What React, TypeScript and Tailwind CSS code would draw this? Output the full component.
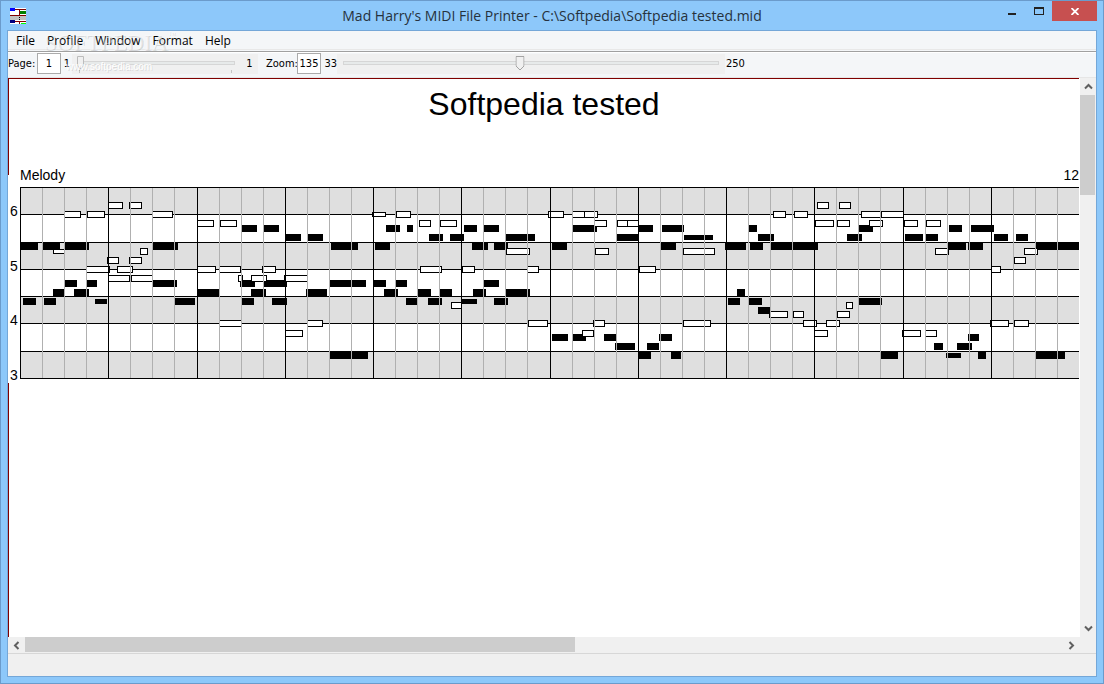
import { useState } from "react";

type Span = [start: number, end: number];
type Row = { y: number; h?: number; spans: Span[] };

const solidRows: Row[] = [
  { y: 225, spans: [[242, 257], [264, 279], [386, 400], [407, 413], [464, 477], [484, 499], [573, 597], [638, 653], [662, 684], [749, 757], [859, 873], [949, 962], [971, 994]] },
  { y: 234, spans: [[286, 301], [308, 323], [429, 443], [450, 464], [506, 535], [617, 639], [758, 774], [847, 862], [905, 923], [926, 938], [994, 1008], [1016, 1028]] },
  { y: 235, h: 5, spans: [[684, 713]] },
  { y: 243, spans: [[20, 38], [43, 60], [65, 89], [153, 178], [331, 358], [375, 390], [472, 488], [494, 508], [552, 567], [661, 676], [725, 746], [750, 763], [771, 818], [948, 966], [968, 983], [1036, 1079]] },
  { y: 280, spans: [[65, 77], [87, 97], [153, 177], [240, 255], [264, 287], [330, 366], [373, 386], [396, 407], [484, 499]] },
  { y: 289, spans: [[53, 64], [74, 89], [197, 219], [251, 266], [306, 327], [384, 398], [418, 431], [440, 452], [473, 486], [506, 530], [737, 745]] },
  { y: 298, spans: [[23, 36], [44, 56], [175, 195], [242, 254], [272, 287], [406, 417], [428, 442], [494, 508], [728, 740], [749, 762], [859, 882]] },
  { y: 299, h: 5, spans: [[95, 107], [461, 477]] },
  { y: 307, spans: [[758, 770]] },
  { y: 334, spans: [[552, 568], [573, 586], [604, 616], [659, 672], [968, 979]] },
  { y: 343, spans: [[615, 635], [647, 659], [934, 943], [957, 972]] },
  { y: 352, spans: [[330, 368], [638, 651], [671, 681], [881, 898], [978, 986], [1036, 1065]] },
  { y: 353, h: 5, spans: [[946, 961]] },
];

const hollowRows: Row[] = [
  { y: 202, spans: [[108, 123], [129, 142], [817, 829], [839, 851]] },
  { y: 211, spans: [[64, 81], [87, 105], [152, 173], [396, 411], [548, 564], [572, 585], [584, 598], [773, 786], [794, 808], [861, 882], [881, 904]] },
  { y: 212, h: 5, spans: [[372, 386]] },
  { y: 220, spans: [[197, 214], [220, 237], [419, 431], [440, 457], [594, 607], [617, 628], [627, 639], [815, 834], [837, 850], [869, 883], [904, 918], [926, 941]] },
  { y: 248, spans: [[140, 148], [506, 530], [595, 609], [683, 715], [935, 949], [1024, 1038]] },
  { y: 249, h: 5, spans: [[53, 65]] },
  { y: 257, spans: [[107, 119], [129, 142], [1014, 1026]] },
  { y: 266, spans: [[86, 110], [117, 133], [197, 216], [219, 241], [262, 276], [420, 442], [462, 475], [527, 539], [639, 656], [991, 1001]] },
  { y: 275, spans: [[108, 130], [131, 153], [238, 243], [251, 267], [284, 308]] },
  { y: 302, spans: [[451, 462], [846, 853]] },
  { y: 311, spans: [[769, 788], [793, 804], [837, 850]] },
  { y: 320, spans: [[219, 242], [307, 323], [528, 548], [593, 605], [683, 711], [803, 817], [826, 840], [990, 1009], [1014, 1029]] },
  { y: 330, spans: [[285, 303], [582, 594], [814, 828], [902, 921], [925, 937]] },
];

const staffLines = [187, 214, 242, 269, 296, 323, 351, 378];
const barLines = [20, 108, 197, 285, 373, 461, 550, 638, 726, 814, 903, 991];
const octaves = [
  { label: "6", y: 216 },
  { label: "5", y: 271 },
  { label: "4", y: 325 },
  { label: "3", y: 380 },
];

function Score() {
  return (
    <svg
      width="1071"
      height="208"
      viewBox="8 175 1071 208"
      shapeRendering="crispEdges"
      className="block shrink-0 overflow-visible font-['Liberation_Sans',Arial,sans-serif] text-[14px]"
      role="img"
      aria-label="Melody"
    >
      <text x="20" y="180">Melody</text>
      <text x="1079" y="180" textAnchor="end">12</text>
      {octaves.map((o) => (
        <text key={o.label} x="10" y={o.y}>{o.label}</text>
      ))}
      {staffLines.slice(0, -1).map((y, i) => (
        <rect key={y} x="20" y={y} width="1059" height={staffLines[i + 1] - y} fill={i % 2 === 0 ? "#dfdfdf" : "#fff"} />
      ))}
      {staffLines.map((y) => (
        <rect key={y} x="20" y={y} width="1059" height="1" />
      ))}
      {hollowRows.filter((r) => r.y === 249).map((r) => <HollowNotes key={r.y} row={r} />)}
      {solidRows.map((r) =>
        r.spans.map(([a, b]) => <rect key={`${r.y}-${a}`} x={a} y={r.y} width={b - a} height={r.h ?? 7} />),
      )}
      {hollowRows.filter((r) => r.y !== 249).map((r) => <HollowNotes key={r.y} row={r} />)}
      {barLines.map((x) => (
        <g key={x}>
          <rect x={x} y="187" width="1" height="192" />
          {[22, 44, 66].map((d) => (
            <rect key={d} x={x + d} y="188" width="1" height="190" fill="#b0b0b0" />
          ))}
        </g>
      ))}
    </svg>
  );
}

function HollowNotes({ row }: { row: Row }) {
  const h = row.h ?? 7;
  return (
    <>
      {row.spans.map(([a, b]) => (
        <g key={a}>
          <rect x={a} y={row.y} width={b - a} height={h} />
          <rect x={a + 1} y={row.y + 1} width={b - a - 2} height={h - 2} fill="#fff" />
        </g>
      ))}
    </>
  );
}

function AppIcon() {
  return (
    <svg width="16" height="16" viewBox="0 0 16 16" shapeRendering="crispEdges" aria-hidden="true">
      <rect width="16" height="16" fill="#fff" />
      <rect y="8" width="16" height="4" fill="#c0c0c0" />
      <rect y="1" width="16" height="1" fill="#800000" />
      <rect y="7" width="16" height="1" fill="#800000" />
      <rect y="13" width="16" height="1" fill="#800000" />
      <rect x="9" y="1" width="1" height="7" fill="#800000" />
      <rect x="9" y="9" width="1" height="1" />
      <rect x="9" y="11" width="1" height="1" />
      <rect x="9" y="13" width="1" height="3" fill="#800000" />
      <rect width="5" height="3" fill="#00f" />
      <rect x="10" y="3" width="6" height="3" fill="#008000" />
      <rect y="12" width="5" height="3" fill="#000080" />
      <rect x="11" y="15" width="5" height="1" fill="#0f0" />
    </svg>
  );
}

type SliderProps = { label: string; min: number; max: number; value: number; onChange: (v: number) => void; ticks?: boolean };

function Slider({ label, min, max, value, onChange, ticks }: SliderProps) {
  const ratio = max > min ? (value - min) / (max - min) : 0;
  return (
    <div className="relative h-5 w-full bg-[#f0f0f0] px-1.5 pt-[7px]">
      <div className="relative h-1 border border-[#d6d6d6] bg-[#e7eaea]">
        <svg
          width="9"
          height="15"
          viewBox="0 0 9 15"
          className={ticks ? "absolute -top-[6px] -left-[3px]" : "absolute -top-[6px] -translate-x-1/2"}
          style={ticks ? undefined : { left: `${ratio * 100}%` }}
          aria-hidden="true"
        >
          <path
            d={ticks ? "M1.5.5h6v9.5l-3 3-3-3z" : "M.5.5h8v9.5l-4 4-4-4z"}
            fill="#f0f0f0"
            stroke={ticks ? "#bcbcbc" : "#a3a3a3"}
          />
        </svg>
      </div>
      {ticks && (
        <div className="flex justify-between pt-[5px] pr-[3px] pl-px">
          <span className="h-[3px] w-px bg-[#c4c4c4]" />
          <span className="h-[3px] w-px bg-[#c4c4c4]" />
        </div>
      )}
      <input
        type="range"
        aria-label={label}
        min={min}
        max={max}
        value={value}
        onChange={(e) => onChange(Number(e.target.value))}
        className="absolute inset-0 m-0 h-full w-full opacity-0"
      />
    </div>
  );
}

type Direction = "up" | "down" | "left" | "right";
const chevrons: Record<Direction, string> = {
  up: "M1 6.5 4.5 3 8 6.5",
  down: "M1 2.5 4.5 6 8 2.5",
  left: "M6.5 1 3 4.5 6.5 8",
  right: "M2.5 1 6 4.5 2.5 8",
};

function ScrollButton({ dir }: { dir: Direction }) {
  return (
    <button type="button" aria-label={`Scroll ${dir}`} className="flex size-4 shrink-0 items-center justify-center">
      <svg width="9" height="9" viewBox="0 0 9 9" fill="none" stroke="#606060" strokeWidth="2" aria-hidden="true">
        <path d={chevrons[dir]} />
      </svg>
    </button>
  );
}

export default function App() {
  const [page, setPage] = useState(1);
  const [zoom, setZoom] = useState(135);

  return (
    <div className="flex h-screen w-full flex-col border border-[#6b9bcb] bg-[#8dc8fa] px-1.5 pb-1.5 text-black">
      <header className="flex h-[29px] shrink-0 items-center">
        <div className="pl-[3px]">
          <AppIcon />
        </div>
        <h1 className="flex-1 pl-[80px] text-center font-['Open_Sans','Noto_Sans',sans-serif] text-[14px] text-[#26323d]">
          Mad Harry's MIDI File Printer - C:\Softpedia\Softpedia tested.mid
        </h1>
        <div className="flex self-start">
          <button type="button" aria-label="Minimize" className="flex h-5 w-[27px] items-center justify-center">
            <svg width="8" height="10" viewBox="0 0 8 10" shapeRendering="crispEdges"><rect y="7" width="8" height="2" fill="#222" /></svg>
          </button>
          <button type="button" aria-label="Maximize" className="flex h-5 w-[27px] items-center justify-center">
            <svg width="10" height="8" viewBox="0 0 10 8" shapeRendering="crispEdges"><path d="M0 0h10v8H0zM1 2v5h8V2z" fillRule="evenodd" fill="#222" /></svg>
          </button>
          <button type="button" aria-label="Close" className="flex h-5 w-[45px] items-center justify-center bg-[#c75050]">
            <svg width="8" height="7" viewBox="0 0 8 7" stroke="#fff" strokeWidth="1.8"><path d="M.5 0l7 7M7.5 0l-7 7" /></svg>
          </button>
        </div>
      </header>

      <main className="flex min-h-0 flex-1 flex-col border border-[#74a7d8] bg-[#f0f0f0]">
        <div className="relative shrink-0 bg-[#f4f6f8]">
          <nav className="flex h-[19px] items-center border-b border-[#e8e8e8] pt-0.5 pl-0.5 font-['Open_Sans','Noto_Sans',sans-serif] text-[12px] leading-4">
            {["File", "Profile", "Window", "Format", "Help"].map((m) => (
              <button key={m} type="button" className="px-1.5">{m}</button>
            ))}
          </nav>
          <div className="mt-px h-0.5 border-b border-white bg-[#a0a0a0]" />
          <div className="flex h-6 items-start font-['DejaVu_Sans_Condensed','DejaVu_Sans',sans-serif] text-[11px] leading-5">
            <label htmlFor="page" className="w-[29px] pt-px">Page:</label>
            <input
              id="page"
              value={page}
              onChange={(e) => setPage(Number(e.target.value) || 1)}
              className="h-[21px] w-6 border border-[#ababab] bg-white text-center"
            />
            <span className="w-[11px] pt-px pr-0.5 text-right">1</span>
            <div className="w-[169px] pt-px">
              <Slider label="Page" min={1} max={1} value={page} onChange={setPage} ticks />
            </div>
            <span className="mt-px h-5 w-[17px] bg-[#f0f0f0] text-center">1</span>
            <label htmlFor="zoom" className="w-[39px] pt-px pl-2">Zoom:</label>
            <input
              id="zoom"
              value={zoom}
              onChange={(e) => setZoom(Number(e.target.value) || 33)}
              className="h-[21px] w-6 border border-[#ababab] bg-white text-center"
            />
            <span className="w-4 pt-px text-right">33</span>
            <div className="w-[388px] pt-px">
              <Slider label="Zoom" min={33} max={250} value={zoom} onChange={setZoom} />
            </div>
            <span className="pt-px pl-px">250</span>
          </div>
          <div aria-hidden="true" className="pointer-events-none absolute top-0 left-9 text-white/40 [text-shadow:1px_1px_0_rgba(0,0,0,0.12)]">
            <p className="flex items-start font-['Liberation_Serif',serif] text-[23px] leading-6">
              SOFTPEDIA<span className="text-[8px] leading-2">™</span>
            </p>
            <p className="pt-1 pl-[22px] font-['Liberation_Sans',sans-serif] text-[10px] leading-4 text-white">www.softpedia.com</p>
          </div>
        </div>

        <div className="flex min-h-0 flex-1 border-t border-[#e6e6e6]">
          <section className="flex min-w-0 flex-1 flex-col overflow-hidden border-t border-[#800000] bg-white">
            <div className="h-24 shrink-0 border-l border-[#800000] pt-1.5">
              <h2 className="text-center font-['Liberation_Sans',Arial,sans-serif] text-[32px] leading-[38px]">Softpedia tested</h2>
            </div>
            <Score />
            <div className="flex-1 border-l border-[#800000]" />
          </section>
          <div className="flex w-[17px] shrink-0 flex-col border-l border-white pb-px">
            <ScrollButton dir="up" />
            <div className="min-h-0 flex-1 pt-px">
              <div className="h-[19%] w-[15px] bg-[#cdcdcd]" />
            </div>
            <ScrollButton dir="down" />
          </div>
        </div>
        <div className="flex h-4 shrink-0 pr-[17px]">
          <ScrollButton dir="left" />
          <div className="min-w-0 flex-1 pl-px">
            <div className="h-[15px] w-[53%] bg-[#cdcdcd]" />
          </div>
          <ScrollButton dir="right" />
        </div>
        <footer className="h-[23px] shrink-0 border-t border-[#d7d7d7] bg-[#f0f0f0]" />
      </main>
    </div>
  );
}
